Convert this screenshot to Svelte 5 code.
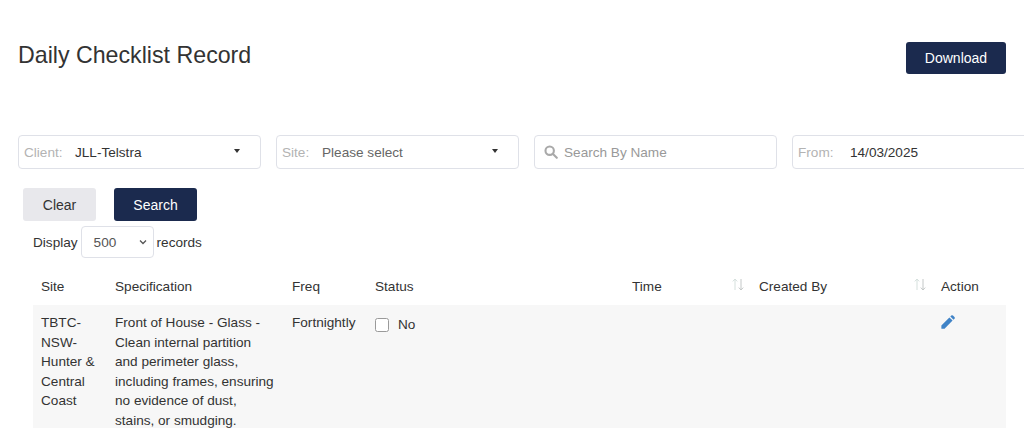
<script lang="ts">
  const columns = [
    { label: "Site", width: 74 },
    { label: "Specification", width: 177 },
    { label: "Freq", width: 83 },
    { label: "Status", width: 257 },
    { label: "Time", width: 127, sortable: true },
    { label: "Created By", width: 182, sortable: true },
    { label: "Action", width: 73 },
  ];

  let checked = $state(false);
</script>

<main class="page">
  <header class="top">
    <h1>Daily Checklist Record</h1>
    <button class="btn primary download">Download</button>
  </header>

  <div class="filters">
    <div class="field">
      <span class="label">Client:</span>
      <span class="value">JLL-Telstra</span>
      <span class="caret"></span>
    </div>
    <div class="field">
      <span class="label">Site:</span>
      <span class="value muted">Please select</span>
      <span class="caret"></span>
    </div>
    <div class="field search">
      <svg width="14" height="14" viewBox="0 0 16 16" fill="none" stroke="#a9a9a9" stroke-width="2.4">
        <circle cx="6.5" cy="6.5" r="4.8" />
        <path d="M10 10l4.6 4.6" stroke-linecap="round" />
      </svg>
      <span class="placeholder">Search By Name</span>
    </div>
    <div class="field date">
      <span class="label">From:</span>
      <span class="value">14/03/2025</span>
    </div>
  </div>

  <div class="actions">
    <button class="btn clear">Clear</button>
    <button class="btn primary">Search</button>
  </div>

  <div class="display">
    <span>Display</span>
    <div class="select">
      <span>500</span>
      <svg width="8" height="6" viewBox="0 0 8 6" fill="none" stroke="#555" stroke-width="1.3">
        <path d="M1 1.5l3 3 3-3" />
      </svg>
    </div>
    <span>records</span>
  </div>

  <table>
    <colgroup>
      {#each columns as col}
        <col style="width: {col.width}px" />
      {/each}
    </colgroup>
    <thead>
      <tr>
        {#each columns as col}
          <th>
            {col.label}
            {#if col.sortable}
              <svg class="sort" width="14" height="13" viewBox="0 0 14 13" fill="none" stroke-width="1">
                <path d="M4 12V1M1.8 3.4L4 1l2.2 2.4" stroke="#d5e0dd" />
                <path d="M10 1v11M7.8 9.6L10 12l2.2-2.4" stroke="#c4c8c8" />
              </svg>
            {/if}
          </th>
        {/each}
      </tr>
    </thead>
    <tbody>
      <tr>
        <td>TBTC-NSW-Hunter &amp; Central Coast</td>
        <td>Front of House - Glass - Clean internal partition and perimeter glass, including frames, ensuring no evidence of dust, stains, or smudging.</td>
        <td>Fortnightly</td>
        <td>
          <label class="status">
            <input type="checkbox" bind:checked />
            <span>No</span>
          </label>
        </td>
        <td></td>
        <td></td>
        <td>
          <svg class="edit" width="14" height="14" viewBox="0 0 15 15" fill="#3f83c7">
            <path d="M0.4 11.2L9 2.6l3.4 3.4-8.6 8.6H0.4z" />
            <path d="M10 1.6l1-1a1.3 1.3 0 0 1 1.8 0l1.6 1.6a1.3 1.3 0 0 1 0 1.8l-1 1z" />
          </svg>
        </td>
      </tr>
    </tbody>
  </table>
</main>

<style>
  :global(body) {
    overflow: hidden;
    background: #fff;
    color: #333;
    font-family: "Liberation Sans", Arial, sans-serif;
    font-size: 13.6px;
  }

  .page {
    width: 1024px;
    height: 428px;
    padding: 42px 18px 0;
    box-sizing: border-box;
    overflow: hidden;
  }

  .top {
    display: flex;
    justify-content: space-between;
    align-items: flex-start;
    height: 93px;
  }

  h1 {
    margin: 0;
    font-size: 23.2px;
    font-weight: 400;
    line-height: 26px;
  }

  .btn {
    border: 1px solid transparent;
    border-radius: 3px;
    font: inherit;
    font-size: 14px;
    padding: 0;
    height: 33px;
  }

  .primary {
    background: #1b2a4e;
    color: #fff;
    width: 83px;
  }

  .download {
    width: 100px;
    height: 32px;
  }

  .clear {
    background: #e8e8ec;
    color: #333;
    width: 73px;
  }

  .filters {
    display: flex;
    gap: 15px;
    width: 1100px;
  }

  .field {
    flex: none;
    position: relative;
    display: flex;
    align-items: center;
    box-sizing: border-box;
    width: 243px;
    height: 34px;
    padding-left: 5px;
    border: 1px solid #dfe1e8;
    border-radius: 4px;
    white-space: nowrap;
  }

  .label {
    width: 51px;
    color: #b3b3b3;
  }

  .field:nth-child(2) .label {
    width: 40px;
  }

  .value.muted {
    color: #666;
  }

  .caret {
    position: absolute;
    right: 20px;
    top: 13px;
    border-style: solid;
    border-width: 4px 3px 0;
    border-color: #333 transparent transparent;
  }

  .search {
    gap: 6px;
    padding-left: 9px;
  }

  .placeholder {
    color: #999;
  }

  .date .label {
    width: 52px;
  }

  .actions {
    display: flex;
    gap: 18px;
    margin: 19px 0 0 5px;
  }

  .display {
    display: flex;
    align-items: center;
    gap: 3px;
    margin: 5px 0 0 15px;
    height: 32px;
  }

  .select {
    display: flex;
    justify-content: space-between;
    align-items: center;
    box-sizing: border-box;
    width: 73px;
    height: 32px;
    padding: 0 6px 0 12px;
    border: 1px solid #dfe1e8;
    border-radius: 4px;
    color: #555;
  }

  table {
    width: 973px;
    margin: 12px 0 0 15px;
    border-collapse: collapse;
    table-layout: fixed;
  }

  th {
    position: relative;
    height: 35px;
    padding: 0 8px 3px;
    box-sizing: border-box;
    font-weight: 400;
    text-align: left;
  }

  .sort {
    position: absolute;
    right: 6px;
    top: 8px;
  }

  td {
    padding: 8px;
    background: #f7f7f7;
    line-height: 19.5px;
    vertical-align: top;
  }

  .status {
    display: flex;
    align-items: center;
    gap: 9px;
    height: 20px;
    margin-top: 2px;
  }

  .status input {
    width: 14px;
    height: 14px;
    margin: 0;
    appearance: none;
    background: #fff;
    border: 1px solid #9a9a9a;
    border-radius: 2.5px;
  }

  .edit {
    display: block;
    margin-top: 2px;
  }
</style>
